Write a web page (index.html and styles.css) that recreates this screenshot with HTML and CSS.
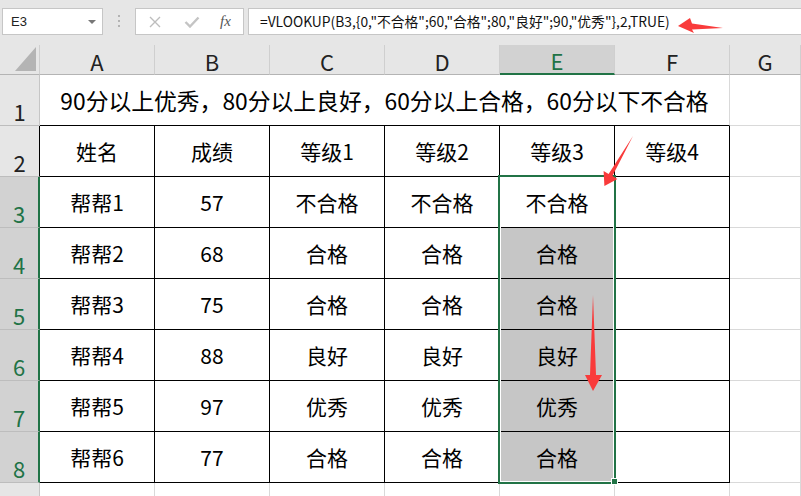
FILE: index.html
```html
<!DOCTYPE html>
<html>
<head>
  <meta charset="utf-8">
  <meta content="width=device-width, initial-scale=1">
  <link rel="stylesheet" href="styles.css">
</head>
<body>
  <div class="bar">
    <div class="namebox">E3<span class="drop"></span></div>
    <div class="grip"><i></i><i></i><i></i></div>
    <div class="fbuttons">
      <svg class="cancel" width="12" height="12" viewBox="0 0 12 12"><path d="M1 1L11 11M11 1L1 11" /></svg>
      <svg class="enter" width="16" height="12" viewBox="0 0 16 12"><path d="M1.5 6L6 10.5L14.5 1.5" /></svg>
      <span class="fx">fx</span>
    </div>
    <div class="formula">=VLOOKUP(B3,{0,"不合格";60,"合格";80,"良好";90,"优秀"},2,TRUE)</div>
  </div>

  <div class="sheet">
    <div class="corner"><svg width="40" height="29" viewBox="0 0 40 29"><polygon points="36,2 36,26 15,26" /></svg></div>
    <div class="colhead">A</div>
    <div class="colhead">B</div>
    <div class="colhead">C</div>
    <div class="colhead">D</div>
    <div class="colhead on">E</div>
    <div class="colhead">F</div>
    <div class="colhead">G</div>

    <div class="rowhead">1</div>
    <div class="c title">90分以上优秀，80分以上良好，60分以上合格，60分以下不合格</div>
    <div class="c"></div>

    <div class="rowhead edge">2</div>
    <div class="c t">姓名</div>
    <div class="c t">成绩</div>
    <div class="c t">等级1</div>
    <div class="c t">等级2</div>
    <div class="c t">等级3</div>
    <div class="c t">等级4</div>
    <div class="c"></div>

    <div class="rowhead on">3</div>
    <div class="c t">帮帮1</div>
    <div class="c t">57</div>
    <div class="c t">不合格</div>
    <div class="c t">不合格</div>
    <div class="c t">不合格</div>
    <div class="c t"></div>
    <div class="c"></div>

    <div class="rowhead on">4</div>
    <div class="c t">帮帮2</div>
    <div class="c t">68</div>
    <div class="c t">合格</div>
    <div class="c t">合格</div>
    <div class="c t pick">合格</div>
    <div class="c t"></div>
    <div class="c"></div>

    <div class="rowhead on">5</div>
    <div class="c t">帮帮3</div>
    <div class="c t">75</div>
    <div class="c t">合格</div>
    <div class="c t">合格</div>
    <div class="c t pick">合格</div>
    <div class="c t"></div>
    <div class="c"></div>

    <div class="rowhead on">6</div>
    <div class="c t">帮帮4</div>
    <div class="c t">88</div>
    <div class="c t">良好</div>
    <div class="c t">良好</div>
    <div class="c t pick">良好</div>
    <div class="c t"></div>
    <div class="c"></div>

    <div class="rowhead on">7</div>
    <div class="c t">帮帮5</div>
    <div class="c t">97</div>
    <div class="c t">优秀</div>
    <div class="c t">优秀</div>
    <div class="c t pick">优秀</div>
    <div class="c t"></div>
    <div class="c"></div>

    <div class="rowhead on">8</div>
    <div class="c t">帮帮6</div>
    <div class="c t">77</div>
    <div class="c t">合格</div>
    <div class="c t">合格</div>
    <div class="c t pick">合格</div>
    <div class="c t"></div>
    <div class="c"></div>

    <div class="rowhead">9</div>
    <div class="c"></div>
    <div class="c"></div>
    <div class="c"></div>
    <div class="c"></div>
    <div class="c"></div>
    <div class="c"></div>
    <div class="c"></div>
  </div>

  <!-- selection E3:E8 -->
  <div class="sel"><span class="handle"></span></div>

  <!-- red arrows drawn over the sheet -->
  <svg class="arrows" width="801" height="496" viewBox="0 0 801 496">
    <polygon points="678,26 690,18 692,23.5 723,28 692,29.5 694,33" />
    <polygon points="604.4,186 603.6,170.9 608.6,173.9 633,136 612.4,176.1 617.4,179.1" />
    <polygon points="593,295 596,375 602,375 593,391 585,375 590,375" />
  </svg>
</body>
</html>
```

FILE: styles.css
```css
* {
  box-sizing: border-box;
}

body {
  margin: 0;
  width: 801px;
  height: 496px;
  overflow: hidden;
  position: relative;
  background: #fff;
  font-family: "Noto Sans CJK SC", sans-serif;
  color: #000;
}

/* formula bar */
.bar {
  height: 45px;
  background: #e6e6e6;
  display: flex;
  align-items: flex-start;
  padding: 8px 0 0 2px;
}

.namebox {
  width: 101px;
  height: 27px;
  background: #fff;
  border: 1px solid #c6c6c6;
  display: flex;
  align-items: center;
  padding-left: 8px;
  font-family: "Liberation Sans", sans-serif;
  font-size: 13px;
  color: #222;
}

.drop {
  margin-left: auto;
  margin-right: 6px;
  border-left: 4px solid transparent;
  border-right: 4px solid transparent;
  border-top: 4px solid #777;
}

.grip {
  display: flex;
  flex-direction: column;
  gap: 3px;
  margin: 7px 0 0 15px;
}

.grip i {
  width: 2px;
  height: 2px;
  background: #b3b3b3;
}

.fbuttons {
  width: 109px;
  height: 27px;
  margin-left: 15px;
  background: #fff;
  border: 1px solid #c6c6c6;
  display: flex;
  align-items: center;
}

.cancel {
  margin-left: 13px;
  fill: none;
  stroke: #bdbdbd;
  stroke-width: 1.4;
}

.enter {
  margin-left: 23px;
  fill: none;
  stroke: #c4c4c4;
  stroke-width: 2.4;
}

.fx {
  margin-left: 20px;
  font-family: "Liberation Serif", serif;
  font-style: italic;
  font-size: 15px;
  color: #555;
}

.formula {
  flex: 1;
  height: 27px;
  margin-left: 4px;
  background: #fff;
  border: 1px solid #c6c6c6;
  border-right: none;
  padding-left: 11px;
  font-size: 13.8px;
  line-height: 25px;
  white-space: nowrap;
  color: #111;
}

/* sheet */
.sheet {
  display: grid;
  grid-template-columns: 40px repeat(6, 115px) 1fr;
  grid-template-rows: 30px repeat(9, 51px);
}

.corner {
  background: #e6e6e6;
  border-right: 1px solid #cfcfcf;
  border-bottom: 1px solid #b4b4b4;
}

.corner svg {
  display: block;
  fill: #b4b4b4;
}

.colhead {
  background: #e6e6e6;
  border-right: 1px solid #cfcfcf;
  border-bottom: 1px solid #b4b4b4;
  display: flex;
  align-items: center;
  justify-content: center;
  font-size: 22px;
  padding-top: 2px;
  color: #222;
}

.colhead.on {
  background: #d2d2d2;
  color: #217346;
  border-bottom: 2px solid #217346;
}

.rowhead {
  background: #e6e6e6;
  border-right: 1px solid #c6c6c6;
  border-bottom: 1px solid #bdbdbd;
  display: flex;
  align-items: flex-end;
  justify-content: center;
  font-size: 22px;
  line-height: 1;
  padding-bottom: 3px;
  color: #222;
}

.rowhead.edge {
  border-right-color: #000;
}

.rowhead.on {
  background: #d2d2d2;
  color: #217346;
  border-right: 2px solid #217346;
}

.c {
  border-right: 1px solid #d9d9d9;
  border-bottom: 1px solid #d9d9d9;
  display: flex;
  align-items: center;
  justify-content: center;
  font-size: 21px;
  white-space: nowrap;
}

.c.t {
  border-right-color: #000;
  border-bottom-color: #000;
}

.title {
  grid-column: span 6;
  border-bottom-color: #000;
  font-size: 22.8px;
}

.pick {
  background: #c6c6c6;
}

.sel {
  position: absolute;
  left: 498px;
  top: 175px;
  width: 118px;
  height: 309px;
  border: 2px solid #217346;
  box-shadow: inset 0 0 0 1px #fff;
}

.handle {
  position: absolute;
  right: -4px;
  bottom: -3px;
  width: 7px;
  height: 7px;
  background: #217346;
  border: 1px solid #fff;
}

.arrows {
  position: absolute;
  left: 0;
  top: 0;
  pointer-events: none;
  fill: #f93b3b;
}
```
